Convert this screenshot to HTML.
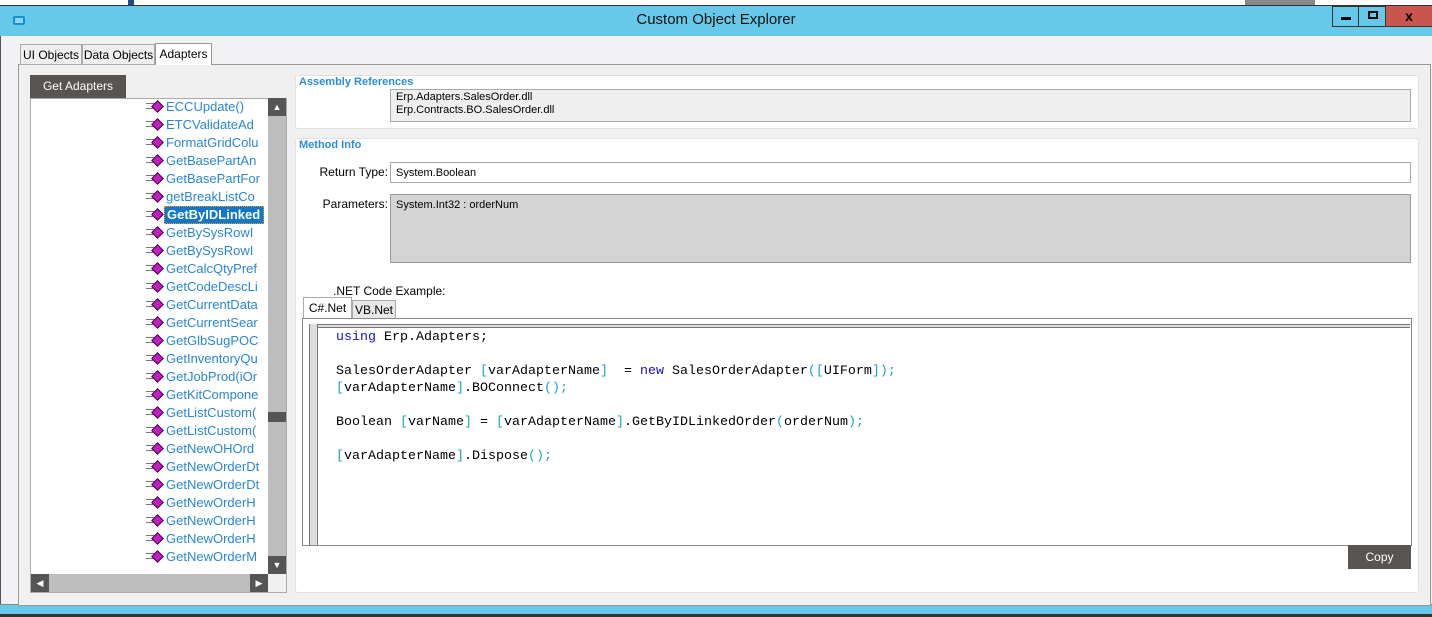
<!DOCTYPE html>
<html><head><meta charset="utf-8"><style>
*{margin:0;padding:0;box-sizing:border-box}
body{width:1432px;height:617px;overflow:hidden;background:#fff;font-family:"Liberation Sans",sans-serif;font-size:12px;color:#000;position:relative}
.a{position:absolute}
.item{position:absolute;left:146px;height:18px;line-height:18px;font-size:13px;color:#2a86d8;white-space:nowrap}
.item .ic{position:absolute;left:0;top:5px;width:8px;height:6px;border-top:1px solid #777;border-bottom:1px solid #777}
.item .dm{position:absolute;left:7px;top:4px;width:9px;height:9px;background:#c020c0;border:1px solid #400040;transform:rotate(45deg)}
.item span{position:absolute;left:20px}
.code{position:absolute;left:336px;font-family:"Liberation Mono",monospace;font-size:13.33px;white-space:pre;color:#000}
.k{color:#1010e0}.b{color:#20a0c0}
</style></head><body>
<div class="a" style="left:0;top:0;width:1432px;height:5px;background:#fff"></div>
<div class="a" style="left:128px;top:0;width:6px;height:5px;background:#1a4a8a"></div>
<div class="a" style="left:1245px;top:0;width:70px;height:5px;background:#888"></div>
<div class="a" style="left:0;top:5px;width:1432px;height:1px;background:#333"></div>
<div class="a" style="left:0;top:6px;width:1432px;height:30px;background:#66c9e9"></div>
<div class="a" style="left:13px;top:16px;width:12px;height:9px;border:2px solid #1a8fc8;border-radius:2px;background:#8ad8f4"></div>
<div class="a" style="left:0;top:11px;width:1432px;text-align:center;font-size:15px;color:#111">Custom Object Explorer</div>
<div class="a" style="left:1332px;top:6px;width:27px;height:21px;border:1px solid #333;background:#66c9e9"></div>
<div class="a" style="left:1341px;top:17px;width:10px;height:3px;background:#000"></div>
<div class="a" style="left:1359px;top:6px;width:27px;height:21px;border:1px solid #333;border-left:none;background:#66c9e9"></div>
<div class="a" style="left:1368px;top:11px;width:10px;height:8px;border:2px solid #000"></div>
<div class="a" style="left:1386px;top:6px;width:46px;height:21px;border-bottom:1px solid #333;background:#c9564c;text-align:center;font-weight:bold;font-size:14px;line-height:21px">x</div>
<div class="a" style="left:0;top:36px;width:1432px;height:568px;background:#f2f2f4;border-left:1px solid #555"></div>
<div class="a" style="left:0;top:604px;width:1432px;height:13px;background:#66c9e9;border-top:1px solid #888"></div>
<div class="a" style="left:0;top:614px;width:1432px;height:3px;background:#333"></div>
<div class="a" style="left:18px;top:64px;width:1413px;height:542px;border:1px solid #999;background:#f0f0f0"></div>
<div class="a" style="left:20px;top:44px;width:62px;height:21px;border:1px solid #aaa;background:#eee;text-align:center;line-height:20px">UI Objects</div>
<div class="a" style="left:82px;top:44px;width:73px;height:21px;border:1px solid #aaa;background:#eee;text-align:center;line-height:20px">Data Objects</div>
<div class="a" style="left:155px;top:43px;width:57px;height:22px;border:1px solid #999;border-bottom:none;background:#fff;text-align:center;line-height:20px">Adapters</div>
<div class="a" style="left:30px;top:75px;width:96px;height:23px;background:#575451;color:#fff;font-size:12px;text-align:center;line-height:23px">Get Adapters</div>
<div class="a" style="left:30px;top:98px;width:257px;height:495px;background:#fff;border:1px solid #aaa;overflow:hidden"></div>
<div style="position:absolute;left:0;top:0">
<div class="item" style="top:98px"><i class="ic"></i><i class="dm"></i><span>ECCUpdate()</span></div>
<div class="item" style="top:116px"><i class="ic"></i><i class="dm"></i><span>ETCValidateAd</span></div>
<div class="item" style="top:134px"><i class="ic"></i><i class="dm"></i><span>FormatGridColu</span></div>
<div class="item" style="top:152px"><i class="ic"></i><i class="dm"></i><span>GetBasePartAn</span></div>
<div class="item" style="top:170px"><i class="ic"></i><i class="dm"></i><span>GetBasePartFor</span></div>
<div class="item" style="top:188px"><i class="ic"></i><i class="dm"></i><span>getBreakListCo</span></div>
<div class="item" style="top:206px"><i class="ic"></i><i class="dm"></i><span style="left:18px;padding:0 2px;background:#1177cc;color:#fff;font-weight:bold;border:1px dotted #f90;line-height:16px;width:100px">GetByIDLinked</span></div>
<div class="item" style="top:224px"><i class="ic"></i><i class="dm"></i><span>GetBySysRowI</span></div>
<div class="item" style="top:242px"><i class="ic"></i><i class="dm"></i><span>GetBySysRowI</span></div>
<div class="item" style="top:260px"><i class="ic"></i><i class="dm"></i><span>GetCalcQtyPref</span></div>
<div class="item" style="top:278px"><i class="ic"></i><i class="dm"></i><span>GetCodeDescLi</span></div>
<div class="item" style="top:296px"><i class="ic"></i><i class="dm"></i><span>GetCurrentData</span></div>
<div class="item" style="top:314px"><i class="ic"></i><i class="dm"></i><span>GetCurrentSear</span></div>
<div class="item" style="top:332px"><i class="ic"></i><i class="dm"></i><span>GetGlbSugPOC</span></div>
<div class="item" style="top:350px"><i class="ic"></i><i class="dm"></i><span>GetInventoryQu</span></div>
<div class="item" style="top:368px"><i class="ic"></i><i class="dm"></i><span>GetJobProd(iOr</span></div>
<div class="item" style="top:386px"><i class="ic"></i><i class="dm"></i><span>GetKitCompone</span></div>
<div class="item" style="top:404px"><i class="ic"></i><i class="dm"></i><span>GetListCustom(</span></div>
<div class="item" style="top:422px"><i class="ic"></i><i class="dm"></i><span>GetListCustom(</span></div>
<div class="item" style="top:440px"><i class="ic"></i><i class="dm"></i><span>GetNewOHOrd</span></div>
<div class="item" style="top:458px"><i class="ic"></i><i class="dm"></i><span>GetNewOrderDt</span></div>
<div class="item" style="top:476px"><i class="ic"></i><i class="dm"></i><span>GetNewOrderDt</span></div>
<div class="item" style="top:494px"><i class="ic"></i><i class="dm"></i><span>GetNewOrderH</span></div>
<div class="item" style="top:512px"><i class="ic"></i><i class="dm"></i><span>GetNewOrderH</span></div>
<div class="item" style="top:530px"><i class="ic"></i><i class="dm"></i><span>GetNewOrderH</span></div>
<div class="item" style="top:548px"><i class="ic"></i><i class="dm"></i><span>GetNewOrderM</span></div>
<div class="item" style="top:566px;height:8px;overflow:hidden"><div style="position:relative;top:-2px;height:18px"><i class="ic"></i><i class="dm"></i><span>GetNewOrderR</span></div></div>
</div>
<div class="a" style="left:268px;top:98px;width:18px;height:476px;background:#bdbdbd"></div>
<div class="a" style="left:268px;top:98px;width:18px;height:18px;background:#555;color:#fff;font-size:9px;text-align:center;line-height:18px">▲</div>
<div class="a" style="left:268px;top:412px;width:18px;height:10px;background:#555"></div>
<div class="a" style="left:268px;top:556px;width:18px;height:18px;background:#555;color:#fff;font-size:9px;text-align:center;line-height:18px">▼</div>
<div class="a" style="left:31px;top:574px;width:237px;height:18px;background:#bdbdbd"></div>
<div class="a" style="left:31px;top:574px;width:18px;height:18px;background:#555;color:#fff;font-size:9px;text-align:center;line-height:18px">◀</div>
<div class="a" style="left:250px;top:574px;width:18px;height:18px;background:#555;color:#fff;font-size:9px;text-align:center;line-height:18px">▶</div>
<div class="a" style="left:268px;top:574px;width:18px;height:18px;background:#f0f0f0"></div>
<div class="a" style="left:295px;top:75px;width:1124px;height:54px;background:#fff;border:1px solid #e2e2e2;border-radius:3px"></div>
<div class="a" style="left:299px;top:76px;color:#2a8ee0;font-weight:bold;font-size:11px">Assembly References</div>
<div class="a" style="left:390px;top:89px;width:1021px;height:33px;background:#efefef;border:1px solid #aaa;padding:1px 5px;font-size:11px;line-height:13px">Erp.Adapters.SalesOrder.dll<br>Erp.Contracts.BO.SalesOrder.dll</div>
<div class="a" style="left:295px;top:138px;width:1124px;height:455px;background:#fff;border:1px solid #e2e2e2;border-radius:3px"></div>
<div class="a" style="left:299px;top:139px;color:#2a8ee0;font-weight:bold;font-size:11px">Method Info</div>
<div class="a" style="left:300px;top:165px;width:88px;text-align:right">Return Type:</div>
<div class="a" style="left:390px;top:162px;width:1021px;height:21px;background:#fff;border:1px solid #aaa;padding:4px 5px;font-size:11px">System.Boolean</div>
<div class="a" style="left:300px;top:197px;width:88px;text-align:right">Parameters:</div>
<div class="a" style="left:390px;top:194px;width:1021px;height:69px;background:#d4d4d4;border:1px solid #999;padding:4px 5px;font-size:11px">System.Int32 : orderNum</div>
<div class="a" style="left:333px;top:284px">.NET Code Example:</div>
<div class="a" style="left:303px;top:297px;width:49px;height:22px;border:1px solid #aaa;border-bottom:none;background:#fff;text-align:center;line-height:20px">C#.Net</div>
<div class="a" style="left:352px;top:300px;width:44px;height:19px;border:1px solid #aaa;background:#e8e8e8;text-align:center;line-height:18px">VB.Net</div>
<div class="a" style="left:302px;top:318px;width:1110px;height:228px;border:1px solid #888;background:#fff"></div>
<div class="a" style="left:309px;top:324px;width:1101px;height:4px;border-top:1px solid #777;border-bottom:1px solid #777;background:#ddd"></div>
<div class="a" style="left:309px;top:324px;width:9px;height:221px;border-left:1px solid #777;border-right:1px solid #777;background:#ddd"></div>
<div class="code" style="top:329px;line-height:17px"><span class="k">using</span> Erp.Adapters;

SalesOrderAdapter <span class="b">[</span>varAdapterName<span class="b">]</span>  = <span class="k">new</span> SalesOrderAdapter<span class="b">([</span>UIForm<span class="b">]);</span>
<span class="b">[</span>varAdapterName<span class="b">]</span>.BOConnect<span class="b">();</span>

Boolean <span class="b">[</span>varName<span class="b">]</span> = <span class="b">[</span>varAdapterName<span class="b">]</span>.GetByIDLinkedOrder<span class="b">(</span>orderNum<span class="b">);</span>

<span class="b">[</span>varAdapterName<span class="b">]</span>.Dispose<span class="b">();</span></div>
<div class="a" style="left:1348px;top:545px;width:63px;height:24px;background:#575451;color:#fff;text-align:center;line-height:24px">Copy</div>
</body></html>
